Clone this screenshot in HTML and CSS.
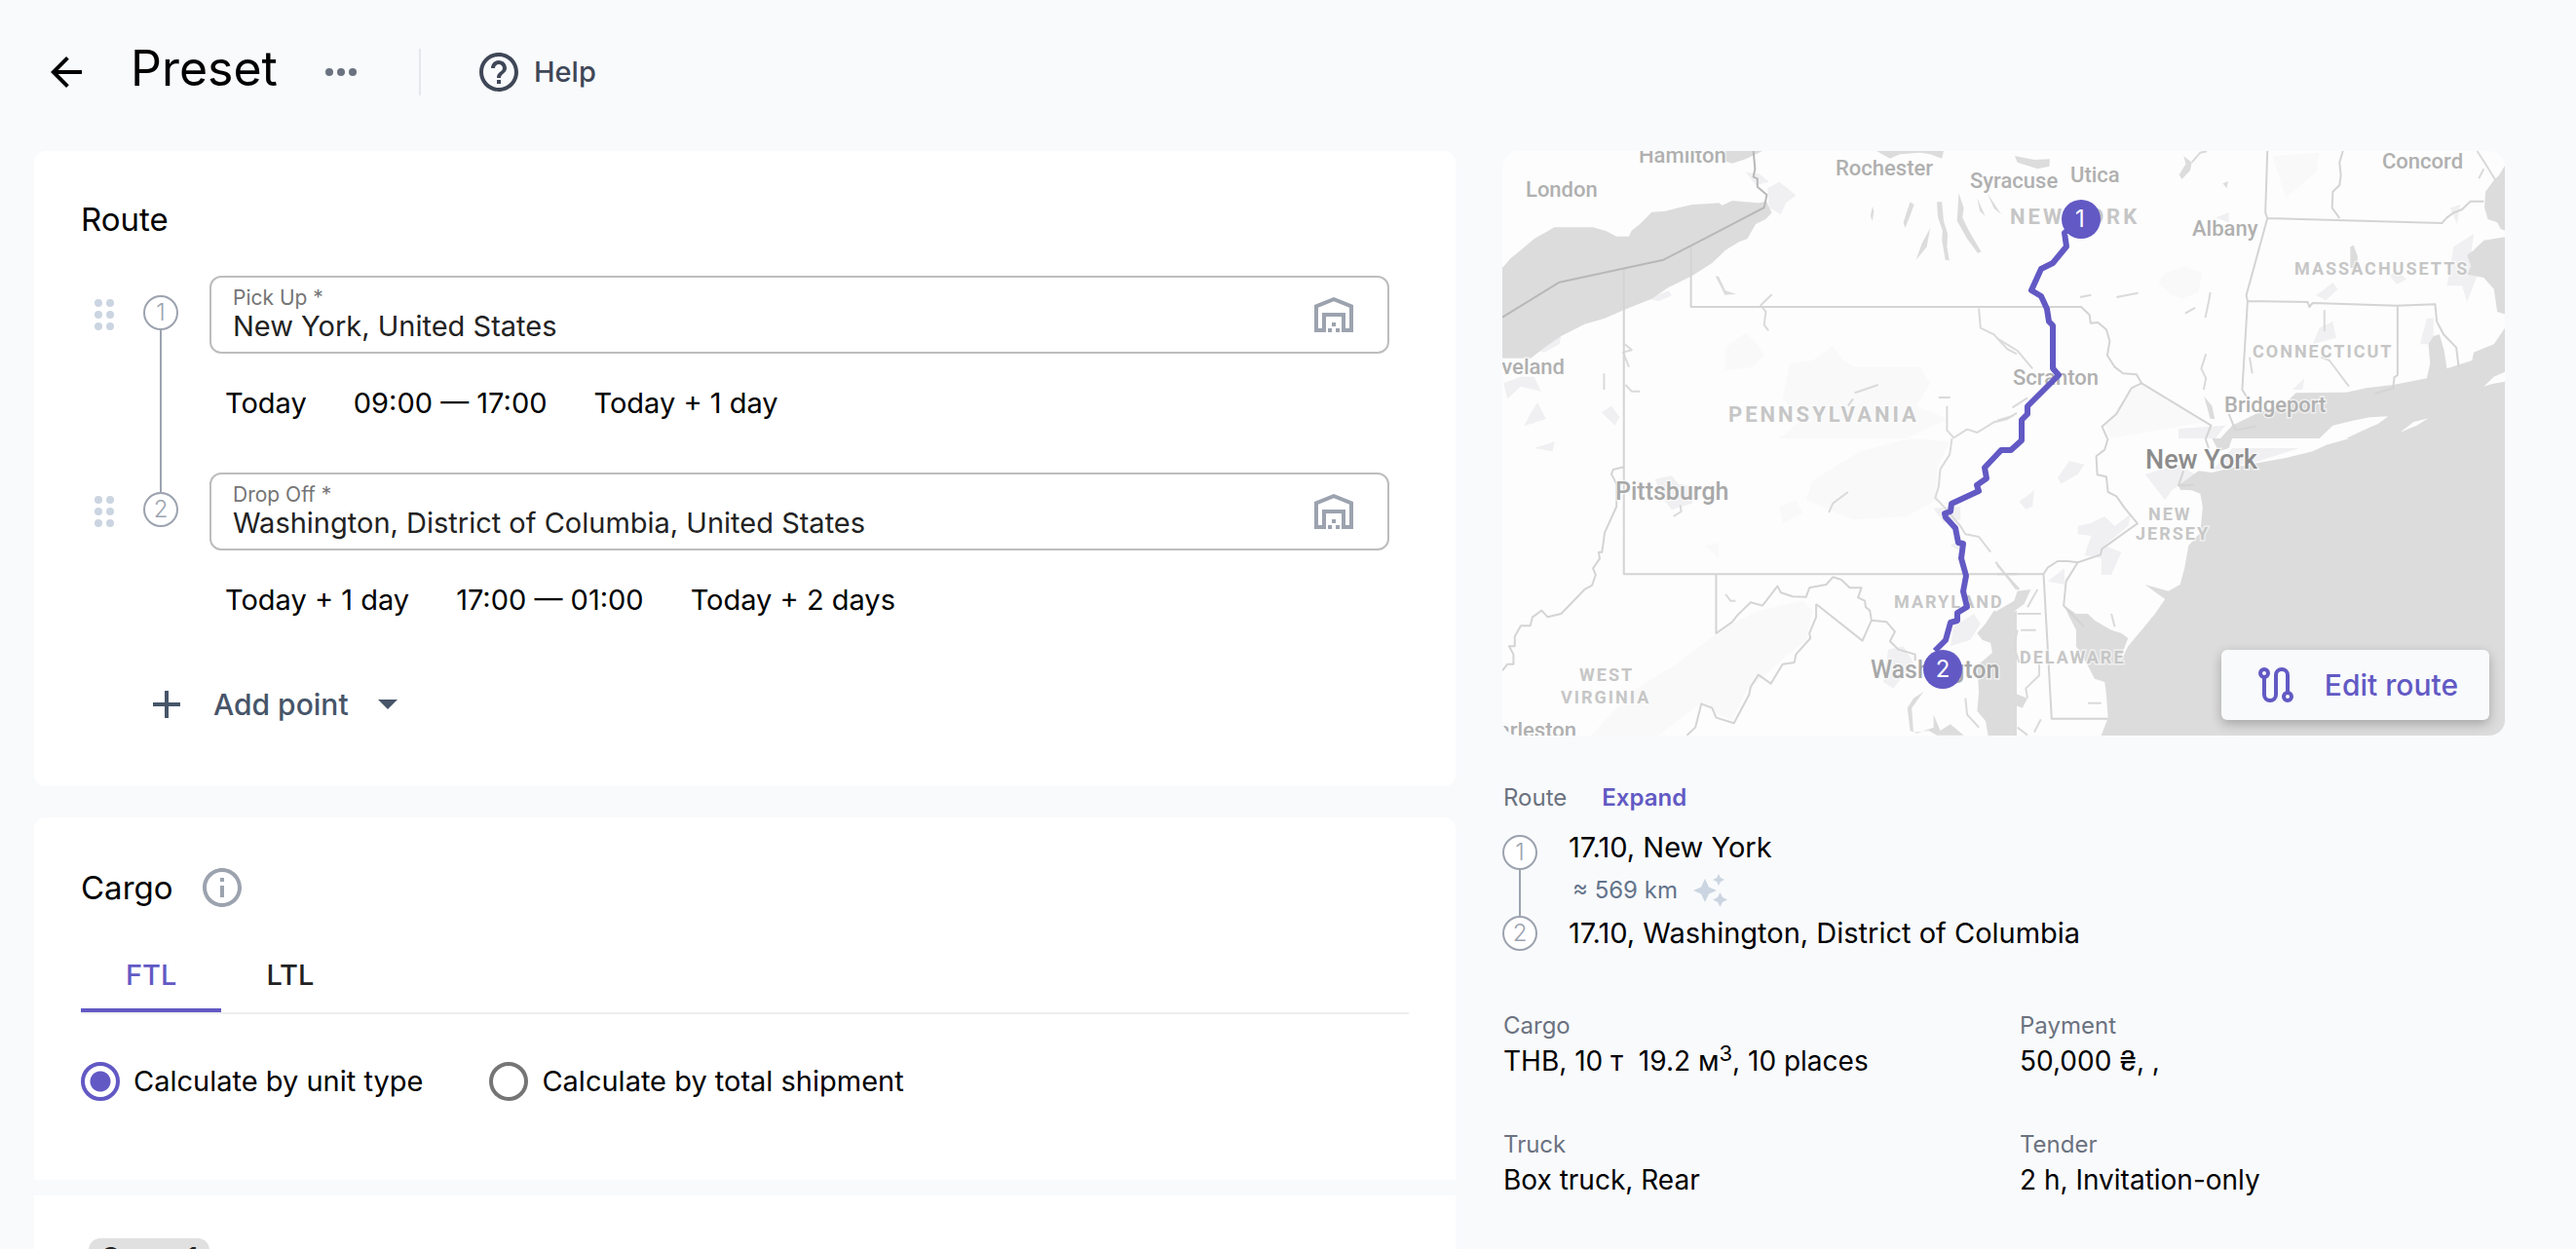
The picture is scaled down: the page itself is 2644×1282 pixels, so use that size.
FILE: index.html
```html
<!DOCTYPE html>
<html lang="en">
<head>
<meta charset="utf-8">
<title>Preset</title>
<meta name="viewport" content="width=device-width, initial-scale=1">
<link rel="stylesheet" href="styles.css">
</head>
<body>
<header class="topbar">
  <button class="icon-button back" type="button" aria-label="Back">
    <svg width="32" height="32" viewBox="0 0 32 32"><path d="M32 14H7.700L18.800 2.800 16 0 0 16 16 32 18.800 29.200 7.700 18H32z"/></svg>
  </button>
  <h1 class="page-title">Preset</h1>
  <button class="icon-button more" type="button" aria-label="More actions">
    <svg width="32" height="8" viewBox="0 0 32 8"><circle cx="4" cy="4" r="4"/><circle cx="16" cy="4" r="4"/><circle cx="28" cy="4" r="4"/></svg>
  </button>
  <span class="divider"></span>
  <button class="help" type="button">
    <svg width="40" height="40" viewBox="2 2 20 20"><path d="M11 18h2v-2h-2v2zm1-16C6.480 2 2 6.480 2 12s4.480 10 10 10 10-4.480 10-10S17.520 2 12 2zm0 18c-4.410 0-8-3.590-8-8s3.590-8 8-8 8 3.590 8 8-3.590 8-8 8zm0-14c-2.210 0-4 1.790-4 4h2c0-1.100.9-2 2-2s2 .9 2 2c0 2-3 1.750-3 5h2c0-2.250 3-2.500 3-5 0-2.210-1.790-4-4-4z"/></svg>
    Help
  </button>
</header>

<main class="layout">
  <div class="form">
    <section class="card route-card">
      <h2 class="card-title">Route</h2>
      <ol class="stops">
        <li class="stop">
          <svg class="handle" width="20" height="32" viewBox="0 0 20 32"><circle cx="4" cy="4" r="4"/><circle cx="16" cy="4" r="4"/><circle cx="4" cy="16" r="4"/><circle cx="16" cy="16" r="4"/><circle cx="4" cy="28" r="4"/><circle cx="16" cy="28" r="4"/></svg>
          <div class="rail"><span class="marker">1</span></div>
          <div class="stop-body">
            <div class="field">
              <div class="field-text">
                <label for="pickup">Pick Up *</label>
                <input id="pickup" type="text" value="New York, United States">
              </div>
              <button class="icon-button warehouse" type="button" aria-label="Choose warehouse">
                <svg width="40" height="36" viewBox="0 0 40 36"><path fill-rule="evenodd" d="M0 36V8L20 0 40 8V36H28V20H12V36zM4 32H8V16H32V32H36V10.700L20 4.300 4 10.700zM18 26h4v4h-4zM14 32h4v4h-4zM22 32h4v4h-4z"/></svg>
              </button>
            </div>
            <div class="schedule">
              <button type="button">Today</button><button type="button">09:00 — 17:00</button><button type="button">Today + 1 day</button>
            </div>
          </div>
        </li>
        <li class="stop">
          <svg class="handle" width="20" height="32" viewBox="0 0 20 32"><circle cx="4" cy="4" r="4"/><circle cx="16" cy="4" r="4"/><circle cx="4" cy="16" r="4"/><circle cx="16" cy="16" r="4"/><circle cx="4" cy="28" r="4"/><circle cx="16" cy="28" r="4"/></svg>
          <div class="rail"><span class="marker">2</span></div>
          <div class="stop-body">
            <div class="field">
              <div class="field-text">
                <label for="dropoff">Drop Off *</label>
                <input id="dropoff" type="text" value="Washington, District of Columbia, United States">
              </div>
              <button class="icon-button warehouse" type="button" aria-label="Choose warehouse">
                <svg width="40" height="36" viewBox="0 0 40 36"><path fill-rule="evenodd" d="M0 36V8L20 0 40 8V36H28V20H12V36zM4 32H8V16H32V32H36V10.700L20 4.300 4 10.700zM18 26h4v4h-4zM14 32h4v4h-4zM22 32h4v4h-4z"/></svg>
              </button>
            </div>
            <div class="schedule">
              <button type="button">Today + 1 day</button><button type="button">17:00 — 01:00</button><button type="button">Today + 2 days</button>
            </div>
          </div>
        </li>
      </ol>
      <button class="add-point" type="button">
        <svg width="28" height="28" viewBox="0 0 28 28"><path d="M12 0h4v12h12v4H16v12h-4V16H0v-4h12z"/></svg>
        <span>Add point</span>
        <svg width="20" height="10" viewBox="0 0 20 10"><path d="M0 0H20L10 10z"/></svg>
      </button>
    </section>

    <section class="card cargo-card">
      <div class="card-head">
        <h2 class="card-title">Cargo</h2>
        <button class="icon-button info" type="button" aria-label="About cargo">
          <svg width="40" height="40" viewBox="2 2 20 20"><path d="M11 7h2v2h-2zm0 4h2v6h-2zm1-9C6.480 2 2 6.480 2 12s4.480 10 10 10 10-4.480 10-10S17.520 2 12 2zm0 18c-4.410 0-8-3.590-8-8s3.590-8 8-8 8 3.590 8 8-3.590 8-8 8z"/></svg>
        </button>
      </div>
      <div class="tabs" role="tablist">
        <button class="tab active" type="button" role="tab" aria-selected="true">FTL</button>
        <button class="tab" type="button" role="tab" aria-selected="false">LTL</button>
      </div>
      <div class="radios">
        <label class="radio"><input type="radio" name="calc" checked>Calculate by unit type</label>
        <label class="radio"><input type="radio" name="calc">Calculate by total shipment</label>
      </div>
    </section>

    <section class="card items-card">
      <span class="chip">Cargo 1</span>
    </section>
  </div>

  <aside class="summary">
    <div class="map">
      <svg class="map-canvas" viewBox="0 0 1029 600" role="img" aria-label="Map of the route">
        <!-- north-west -->
        <g transform="translate(-12 -15) scale(.3444 .3333)">
          <path class="wood" d="M700 650L760 605 795 640 815 675 780 710 700 720zM890 700L960 690 1020 645 1050 690 1090 710H1280L1310 760 1270 830 1360 870 1240 930H860L930 870 870 810z"/>
          <path class="urban" d="M825 160L860 140 885 160 910 182 880 205 865 240 830 220zM760 110L800 115 830 140 790 150zM470 500L530 475 540 490 500 508zM140 660L210 615 205 640 160 665zM38 760L90 740 130 740 150 785 90 770 50 808zM120 850L140 820 165 870 100 892zM330 850L360 830 385 865 370 890z"/>
          <path class="water" d="M35 405L60 375 90 350 130 315 165 295 190 280H305L345 292 375 308H412L420 290 445 270 480 233 520 230 560 220 600 210 640 208 680 205 690 212 720 198 760 202 800 205 822 200 838 235 820 255 790 270 765 315 740 325 700 350 660 390 600 430 530 465 480 500 400 533 340 560 280 578 210 615 160 650 120 683H35z"/>
          <path class="water" d="M700 45H810L760 70 720 83 695 75zM1150 45H1350L1345 68 1310 55 1280 50 1220 55 1190 68z"/>
          <path class="water" d="M1330 202H1345L1350 260 1362 300 1360 340 1367 382 1355 380 1345 320 1347 290 1333 250zM1395 175L1410 220 1406 250 1425 290 1462 355 1452 360 1420 315 1390 260zM1250 202L1262 210 1248 250 1235 282 1230 265zM1310 282L1300 340 1268 380 1285 330zM1450 190L1474 245 1458 230zM1480 175L1522 240 1500 222zM1138 215L1142 230 1138 260 1132 245zM670 430L680 432 700 475 732 486 698 488z"/>
          <path class="river" d="M838 487L820 505 805 520 820 540 815 580 828 598M400 640L420 658 395 665 412 710M402 765L420 785 445 785M338 730V780M1455 530L1460 590 1500 610 1540 655 1568 670M1335 804H1370M1360 830V905L1380 928 1420 902 1450 912 1500 880 1540 870 1568 852M1065 830L1080 808M1085 790L1155 765"/>
          <path class="state" d="M397 405V930M597 340V525H1568"/>
          <path class="country" d="M35 557L205 449 515 380 600 335 815 219 823 180 795 155 795 130 783 125 788 100 783 45"/>
        </g>
        <!-- north-east -->
        <g transform="translate(508 -15) scale(.3444 .3333)">
          <path class="wood" d="M500 420L560 400 610 420 600 480 550 500 520 490 480 450zM820 60L960 50 950 110 860 190zM400 780L430 765 620 880 500 900 340 930 320 890z"/>
          <path class="urban" d="M1360 340L1420 300 1410 380 1430 430 1400 510 1385 460 1340 460zM1280 560L1300 560 1300 640 1260 640zM960 590L1000 570 1010 620 940 640zM950 490L1000 450 1015 470 980 505zM880 780L915 745 910 780zM540 900L680 890 650 930H540zM650 250L690 235 690 265zM1170 430L1190 410 1220 440 1190 455zM1350 220L1380 210 1370 270z"/>
          <path class="water" d="M1513 90L1495 120 1480 135 1455 170 1452 220 1462 255 1490 265 1500 285 1513 290V310L1450 320 1420 350 1400 365 1412 400 1400 425 1450 435 1480 470 1490 540 1513 548z"/>
          <path class="water" d="M1513 590L1480 640 1420 665 1415 690 1340 715 1332 660 1318 610 1300 615 1285 640 1290 700 1280 745 1180 765 1100 775 1040 788 890 790 860 820 780 850 700 890 665 930H1513z"/>
          <path class="land" d="M960 930L1000 890 1060 875 1110 865 1165 862 1135 885 1090 905 1040 930zM1200 912L1240 880 1285 868 1250 890zM1450 770L1480 740 1513 725V755L1475 762zM1345 640L1362 645 1365 700 1348 705z"/>
          <path class="water" d="M52 60L110 72 157 70 155 92 120 100 60 80zM555 60L580 80 575 105 550 132 542 118 562 85zM1052 340L1062 335 1074 370V408L1052 405zM616 800L640 830 648 870 635 870zM672 145L688 138 684 160z"/>
          <path class="river" d="M580 80L605 50 625 46M635 480L628 520 620 558M560 545L590 528M355 495L420 482M247 495L280 488M622 670L608 715 622 745 615 780M752 680L760 730M965 680L990 690 1048 770M0 622L60 660 105 715M975 535V600M45 835L90 805M0 875L48 860M1430 45L1452 80 1485 135M1435 130L1450 100"/>
          <path class="state" d="M805 45L799 235 805 252 742 490 746 507 730 780 745 805M805 252L1325 267 1340 250 1360 235 1385 225 1410 200H1450M746 507L925 510 930 525 940 513 1190 521 1305 517 1310 570 1330 610 1368 650 1375 710M1193 521V735L1183 742 1180 775 1125 793M1030 45L1020 80 1024 120 1020 150 1000 170 998 220 1020 252M0 525H250L275 550 278 575 300 573 325 595 335 630 328 675 350 710 375 730 415 733 430 760 637 890 622 930M430 760L400 775 355 855 312 893 328 930M690 855L710 905 770 893"/>
        </g>
        <!-- south-west -->
        <g transform="translate(-12 295) scale(.3444 .3333)">
          <path class="wood" d="M960 130L1100 40 1250 0 1370 10 1330 90 1330 190 1240 240 1080 250 940 190zM700 580L800 530 930 500 960 530 940 620 860 690 760 780 720 870 620 820 500 914H300L420 780 560 690zM860 210L910 190 930 230 870 260zM640 330L680 320 680 370z"/>
          <path class="urban" d="M490 125L540 115 560 140 620 150 600 200 540 220 510 180zM130 30L190 10 185 40zM1320 215L1400 210 1400 250 1350 260zM1185 650L1230 640 1260 690 1200 770 1170 750zM1380 580L1440 540 1460 570 1430 620 1370 640zM1370 330L1400 310 1395 345z"/>
          <path class="water" d="M1568 530L1540 540 1500 530 1475 570 1450 600 1465 620 1490 630 1495 660 1450 700 1455 780 1450 840 1475 870 1485 930H1568zM1290 780L1260 800 1242 830 1250 900 1270 908 1320 890 1320 850 1340 900 1370 880 1410 914H1330L1305 900 1260 905 1255 830z"/>
          <path class="river" d="M1375 0L1368 50 1340 95 1335 150 1325 183 1355 215 1400 270 1415 295 1455 303 1490 350M1505 380L1568 465M1008 228L1020 200 1065 165M565 205L568 225 545 240M700 480L715 500 730 500M1415 800L1420 850 1455 890"/>
          <path class="state" d="M397 0V418H1568M672 418V600L720 565 735 545 775 505 810 515 855 455 865 475 900 487 940 488 950 460 1000 450 1020 427 1045 435 1070 460H1105L1095 490 1115 500 1118 520 1130 530 1135 560 1180 565 1205 595 1190 625 1215 650 1265 665V685M970 510L1108 623 1135 560M970 510V550L950 600 953 615 910 665 905 690 870 695 835 755 798 728 775 765 770 790 725 877 672 860 660 830 628 817 610 890 585 914M397 88L365 96 360 110 375 140V210L340 290 332 350 322 350 325 370 305 400 313 420 302 453 280 465 210 540 170 550 152 530 125 550 118 577H90L72 610V640H55L68 665V695H50L35 715"/>
        </g>
        <!-- south-east -->
        <g transform="translate(508 295) scale(.3444 .3333)">
          <path class="urban" d="M180 120L215 70 260 80 240 110 190 140zM65 195L110 160 105 210 85 218zM240 270L280 260 320 240 350 270 400 230 390 270 320 330 370 350 340 420 310 420 310 370 260 360 280 300 240 295zM440 110L540 80 590 110 520 160 500 190 470 150zM700 30L900 30 780 70 640 100zM150 440L200 400 200 450z"/>
          <path class="water" d="M1050 0L980 20 940 40 860 60 780 75 700 90 640 105 600 100 540 145 545 158 580 160 605 170 612 210 605 290 570 330 558 400 545 450 510 470 440 450 480 480 500 495 470 540 430 590 390 640 365 690 375 655 390 615 370 600 340 590 290 560 270 540 235 540 200 515 215 550 235 590 235 640 265 690 290 740 320 750 325 790 330 860 310 914V930H1513V0z"/>
          <path class="water" d="M0 530L50 500 60 470 100 465 80 510 40 540 20 590 10 640 30 690 15 740 40 780 90 800 75 830 50 820 30 790 50 850 20 870 0 860zM640 0L700 0 690 30 660 40z"/>
          <path class="river" d="M60 540H130M70 590H115M60 590L50 640 65 690M125 690V730L85 770 90 800M120 465L90 520M340 540L350 580M0 390L65 465M130 865L110 905M60 890L90 914M270 815H310"/>
          <path class="state" d="M330 0L320 35 295 55 298 112 325 118 330 165 355 178 380 215 418 262 400 275 312 340 308 358 240 382 205 440 198 515 258 580M0 418H138L150 398 180 378H210L240 382M138 418L162 863H330M620 0L630 30M555 100L540 145 585 143"/>
        </g>
        <g class="city">
          <text x="24" y="47">London</text><text x="140" y="12">Hamilton</text><text x="342" y="25">Rochester</text><text x="480" y="38">Syracuse</text><text x="583" y="32">Utica</text><text x="708" y="87">Albany</text><text x="903" y="18">Concord</text><text x="64" y="229" text-anchor="end">Cleveland</text><text x="741" y="268">Bridgeport</text><text x="524" y="240">Scranton</text><text x="76" y="602" text-anchor="end">Charleston</text>
        </g>
        <g class="city large"><text x="116" y="358">Pittsburgh</text><text x="378" y="541">Washington</text></g>
        <text class="city metro" x="660" y="326">New York</text>
        <g class="region"><text x="232" y="278">PENNSYLVANIA</text><text x="521" y="75">NEW YORK</text></g>
        <g class="region small"><text x="813" y="127">MASSACHUSETTS</text><text x="770" y="212">CONNECTICUT</text><text x="402" y="469">MARYLAND</text><text x="531" y="526">DELAWARE</text><text x="663" y="379">NEW</text><text x="650" y="399">JERSEY</text><text x="79" y="544">WEST</text><text x="60" y="567">VIRGINIA</text></g>
        <path class="track" d="M594 70L577 84 579 98 565 115 553 121 543 143 553 149 559 162 561 175 565 179V223L571 230 539 262V270L533 276V297L522 307H512L495 325 497 336 487 343 489 349 461 362 460 370 454 372 455 376 465 387 468 402 473 403 471 418 476 436 473 452 477 468 467 474V482L460 484 455 502 444 513"/>
        <g class="pin"><circle cx="594" cy="70" r="20"/><text x="593" y="78">1</text><circle cx="452" cy="532" r="20"/><text x="452" y="540">2</text></g>
      </svg>
      <button class="edit-route" type="button">
        <svg width="36" height="36" viewBox="0 0 36 36"><g fill="none" stroke="currentColor" stroke-width="4"><circle cx="6" cy="6" r="4"/><circle cx="30" cy="30" r="4"/><path d="M6 10V28a6 6 0 0 0 12 0V8a6 6 0 0 1 12 0V26"/></g></svg>
        Edit route
      </button>
    </div>

    <div class="summary-head"><span class="caption">Route</span><a class="expand" href="#">Expand</a></div>
    <div class="legs">
      <div class="leg-rail"><span class="marker">1</span><span class="leg-line"></span><span class="marker">2</span></div>
      <div class="leg-text">
        <p class="value">17.10, New York</p>
        <p class="distance">≈ 569 km
          <svg width="36" height="34" viewBox="0 0 36 34"><path d="M12 5L16 13.500 24 17 16 20.500 12 29 8 20.500 0 17 8 13.500zM26 0L28 4 32 6 28 8 26 12 24 8 20 6 24 4zM27.500 19L30 24 35 26.500 30 29 27.500 34 25 29 20 26.500 25 24z"/></svg>
        </p>
        <p class="value">17.10, Washington, District of Columbia</p>
      </div>
    </div>
    <dl class="facts">
      <div><dt>Cargo</dt><dd>THB, 10 т&nbsp; 19.2 м<sup>3</sup>, 10 places</dd></div>
      <div><dt>Payment</dt><dd>50,000 ₴, ,</dd></div>
      <div><dt>Truck</dt><dd>Box truck, Rear</dd></div>
      <div><dt>Tender</dt><dd>2 h, Invitation-only</dd></div>
    </dl>
  </aside>
</main>
</body>
</html>
```
FILE: styles.css
```css
* { box-sizing: border-box; }

html, body { height: 100%; }

body {
  margin: 0;
  overflow: hidden;
  background: #f9fafc;
  color: #000;
  font-family: Inter, "Liberation Sans", sans-serif;
  font-size: 29px;
  line-height: 36px;
}

h1, h2, p, ol, dl, dd { margin: 0; padding: 0; font-weight: 400; }
ol { list-style: none; }
svg { display: block; flex: none; fill: currentColor; }

button {
  padding: 0;
  border: 0;
  background: none;
  color: inherit;
  font: inherit;
  cursor: pointer;
}

/* Top bar */
.topbar {
  display: flex;
  align-items: flex-start;
  height: 155px;
  padding: 50px 52px 0;
}
.topbar > * { height: 48px; display: flex; align-items: center; }
.page-title { margin-left: 50px; padding-bottom: 8px; font-size: 50px; line-height: 56px; }
.more { margin-left: 49px; color: #6b7280; }
.divider { width: 2px; margin-left: 64px; background: #e5e7eb; }
.help { gap: 16px; margin-left: 60px; color: #3f4757; font-weight: 500; }

/* Columns */
.layout {
  display: grid;
  grid-template-columns: 1459fr 1029fr;
  gap: 48px;
  padding: 0 73px 0 35px;
}

/* Cards */
.card { background: #fff; padding: 0 48px; }
.card-title { font-size: 33px; line-height: 40px; }
.route-card { border-radius: 12px; padding-top: 50px; padding-bottom: 64px; }
.cargo-card { margin-top: 32px; border-radius: 12px 12px 0 0; padding-top: 52px; padding-bottom: 81px; }
.items-card { margin-top: 16px; padding-top: 44px; padding-bottom: 48px; }
.card-head { display: flex; align-items: center; gap: 30px; }
.info { color: #9ca3af; }

/* Stops */
.stops { margin-top: 38px; padding: 0 20px 0 14px; }
.stop { display: flex; }
.handle { margin-top: 24px; color: #cbd5e1; }
.rail { display: flex; flex-direction: column; align-items: center; margin: 0 32px 0 30px; }
.rail::before, .rail::after { content: ""; width: 2px; background: #9ca3af; }
.rail::before { height: 20px; }
.rail::after { flex: 1; }
.stop:first-child .rail::before, .stop:last-child .rail::after { background: none; }
.marker {
  display: flex;
  align-items: center;
  justify-content: center;
  width: 36px;
  height: 36px;
  border: 2px solid #9ca3af;
  border-radius: 50%;
  color: #9ca3af;
  font-size: 24px;
  font-weight: 300;
  background: #fff;
}
.stop-body { flex: 1; min-width: 0; }
.field {
  display: flex;
  align-items: center;
  height: 80px;
  padding: 0 35px 0 22px;
  border: 2px solid #bdbdbd;
  border-radius: 12px;
}
.field-text { flex: 1; display: flex; flex-direction: column; }
.field label { color: #757575; font-size: 21px; line-height: 24px; }
.field input {
  width: 100%;
  height: 34px;
  padding: 0;
  border: 0;
  outline: 0;
  background: none;
  color: #222;
  font: inherit;
}
.warehouse { color: #9ca3af; }
.schedule { display: flex; gap: 48px; padding: 33px 0 53px 16px; }
.add-point { display: flex; align-items: center; height: 40px; margin: 16px 0 0 74px; color: #475569; font-size: 30px; font-weight: 500; }
.add-point span { margin: 0 30px 0 34px; }

/* Cargo */
.tabs { display: flex; margin-top: 32px; border-bottom: 2px solid #eee; }
.tab { height: 76px; padding: 0 46px; color: #222; font-weight: 500; }
.tab.active { color: #6259c4; box-shadow: inset 0 -4px #6259c4; }
.radios { display: flex; gap: 68px; margin-top: 49px; }
.radio { display: flex; align-items: center; gap: 14px; height: 40px; }
.radio input {
  appearance: none;
  width: 40px;
  height: 40px;
  margin: 0;
  border: 4px solid #757575;
  border-radius: 50%;
}
.radio input:checked {
  border-color: #6259c4;
  background: radial-gradient(circle, #6259c4 10px, transparent 11px);
}
.chip {
  display: inline-block;
  margin-left: 8px;
  padding: 2px 12px;
  border-radius: 12px;
  background: #e0e0e0;
  color: #222;
  font-size: 28px;
  font-weight: 500;
}

/* Map */
.map { position: relative; }
.map-canvas { width: 100%; height: auto; border-radius: 16px; background: #fdfdfd; font-family: Roboto, sans-serif; }
.water { fill: #dcdcdc; }
.land { fill: #fdfdfd; }
.wood { fill: #f9f9f9; }
.urban { fill: #f0f0f2; }
.state, .river, .country { fill: none; vector-effect: non-scaling-stroke; stroke-linejoin: round; }
.state { stroke: #d4d4d4; stroke-width: 2; }
.river { stroke: #dadada; stroke-width: 2; }
.country { stroke: #b8b8b8; stroke-width: 2; }
.map-canvas text { paint-order: stroke; stroke: #fdfdfd; stroke-opacity: .6; stroke-width: 3px; }
.city { fill: #b0b0b0; font-size: 22px; font-weight: 500; }
.city.large { font-size: 25px; fill: #a8a8a8; }
.city.metro { font-size: 27px; fill: #8c8c8c; }
.region { fill: #c6c6c6; font-size: 22px; font-weight: 700; letter-spacing: 3px; }
.region.small { font-size: 18px; letter-spacing: 2px; }
.track { fill: none; stroke: #6259c4; stroke-width: 6; stroke-linejoin: round; }
.pin { fill: #6259c4; }
.map-canvas .pin text { fill: #fff; stroke: none; font: 400 24px Inter, sans-serif; text-anchor: middle; }
.edit-route {
  position: absolute;
  right: 16px;
  bottom: 16px;
  display: flex;
  align-items: center;
  gap: 32px;
  height: 72px;
  padding: 0 32px 0 38px;
  border-radius: 6px;
  background: #f9fafc;
  box-shadow: 0 4px 12px rgba(0, 0, 0, .25);
  color: #6259c4;
  font-size: 30px;
  font-weight: 500;
}

/* Summary */
.summary-head { display: flex; gap: 36px; margin-top: 48px; padding-left: 1px; font-size: 24px; line-height: 32px; }
.caption, .facts dt { color: #6b7280; }
.expand { color: #6259c4; font-weight: 600; text-decoration: none; }
.legs { display: flex; gap: 32px; margin-top: 16px; }
.leg-rail { display: flex; flex-direction: column; align-items: center; padding-top: 6px; }
.leg-line { flex: 1; width: 2px; background: #9ca3af; }
.leg-text { padding-top: 1px; }
.distance { display: flex; align-items: center; gap: 16px; height: 52px; padding-left: 4px; color: #64748b; font-size: 24px; }
.distance svg { color: #cbd5e1; }
.facts { display: grid; grid-template-columns: 1fr 1fr; gap: 50px 32px; margin-top: 61px; padding-left: 1px; }
.facts dt { font-size: 24px; line-height: 32px; }
.facts dd { font-size: 28px; line-height: 40px; }
.facts sup { font-size: 22px; line-height: 0; }
```
